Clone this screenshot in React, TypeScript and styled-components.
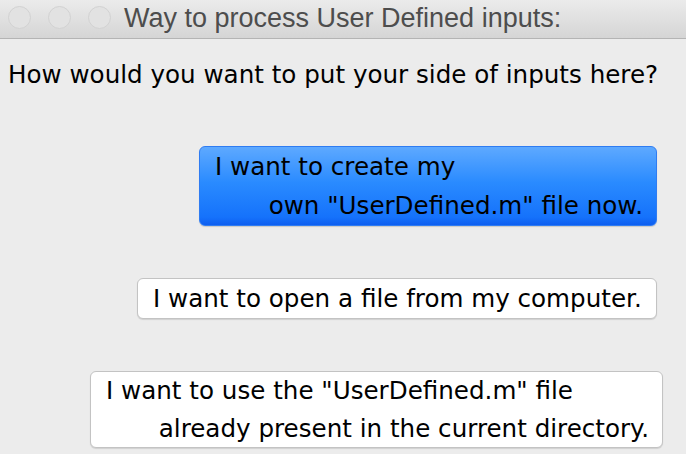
import styled, { createGlobalStyle } from "styled-components";

const GlobalStyle = createGlobalStyle`
  html, body {
    margin: 0;
    padding: 0;
    background: #ececec;
  }
  body {
    width: 686px;
    height: 454px;
    overflow: hidden;
  }
`;

const Window = styled.div`
  width: 686px;
  height: 454px;
  display: flex;
  flex-direction: column;
  background: #ececec;
`;

const TitleBar = styled.div`
  height: 38px;
  flex-shrink: 0;
  display: flex;
  align-items: center;
  padding-left: 8px;
  background: linear-gradient(#ebebeb, #d5d5d5);
  border-bottom: 1px solid #b4b4b4;
  box-sizing: content-box;
`;

const Lights = styled.div`
  display: flex;
  gap: 17px;
  margin-right: 13px;
  margin-top: -3px;
`;

const Light = styled.span`
  width: 21px;
  height: 21px;
  border-radius: 50%;
  background: #e2e2e2;
  border: 1px solid #d2d2d2;
`;

const Title = styled.div`
  font-family: "Liberation Sans", Arial, sans-serif;
  font-size: 27px;
  color: #4d4d4d;
  margin-top: -2px;
`;

const Content = styled.div`
  flex: 1;
  display: flex;
  flex-direction: column;
  align-items: flex-end;
  padding: 0 29px 0 8px;
`;

const Question = styled.div`
  align-self: flex-start;
  margin-top: 20px;
  white-space: nowrap;
  font-family: "DejaVu Sans", Verdana, sans-serif;
  font-size: 24.6px;
  line-height: 32px;
  color: #000;
`;

const Choice = styled.button<{
  $primary?: boolean;
  $width: number;
  $top: number;
  $shift?: number;
  $lh?: number;
}>`
  width: ${(p) => p.$width}px;
  margin-top: ${(p) => p.$top}px;
  margin-right: ${(p) => -(p.$shift || 0)}px;
  display: flex;
  flex-direction: column;
  padding: 0 13px 0 15px;
  box-sizing: border-box;
  border-radius: 6px;
  font-family: "DejaVu Sans", Verdana, sans-serif;
  font-size: 24.6px;
  color: #000;
  line-height: ${(p) => p.$lh || 39}px;
  cursor: pointer;
  border: 1px solid ${(p) => (p.$primary ? "#2f7cf2" : "#c3c3c3")};
  background: ${(p) =>
    p.$primary ? "linear-gradient(#5ea9ff, #2a8bff 45%, #1572fb 90%, #0e5ef0)" : "#fff"};
  box-shadow: 0 1px 1px rgba(0, 0, 0, ${(p) => (p.$primary ? 0.15 : 0.12)});
`;

const Line = styled.span<{ $end?: boolean }>`
  align-self: ${(p) => (p.$end ? "flex-end" : "flex-start")};
  white-space: nowrap;
`;

export default function App() {
  return (
    <Window>
      <GlobalStyle />
      <TitleBar>
        <Lights>
          <Light />
          <Light />
          <Light />
        </Lights>
        <Title>Way to process User Defined inputs:</Title>
      </TitleBar>
      <Content>
        <Question>How would you want to put your side of inputs here?</Question>
        <Choice $primary $width={458} $top={55}>
          <Line>I want to create my</Line>
          <Line $end>own "UserDefined.m" file now.</Line>
        </Choice>
        <Choice $width={520} $top={52}>
          <Line>I want to open a file from my computer.</Line>
        </Choice>
        <Choice $width={573} $top={52} $shift={6} $lh={37.5}>
          <Line>I want to use the "UserDefined.m" file</Line>
          <Line $end>already present in the current directory.</Line>
        </Choice>
      </Content>
    </Window>
  );
}
